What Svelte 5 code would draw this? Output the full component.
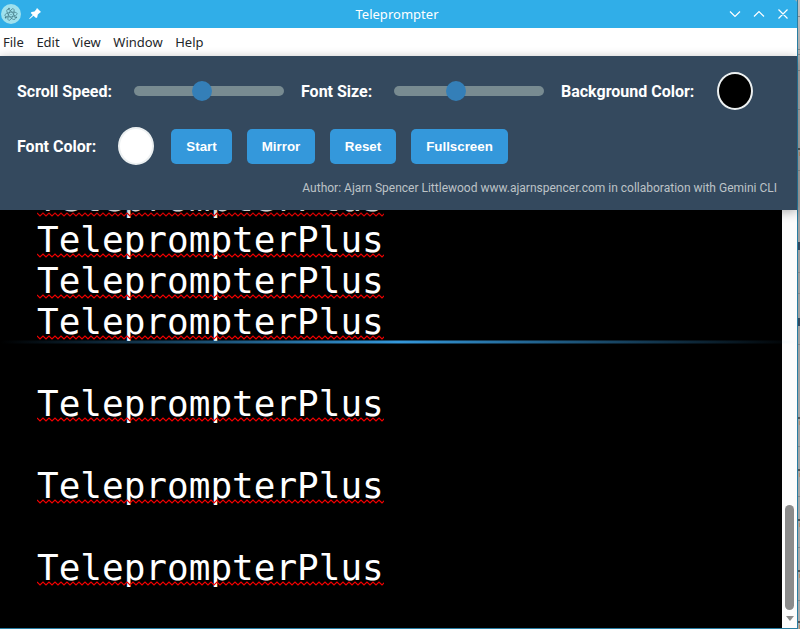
<script>
  const menus = ['File', 'Edit', 'View', 'Window', 'Help'];
  const lines = ['TeleprompterPlus', 'TeleprompterPlus', 'TeleprompterPlus', 'TeleprompterPlus', '', 'TeleprompterPlus', '', 'TeleprompterPlus', '', 'TeleprompterPlus'];
  const wave = 'M0 1' + Array.from({ length: 58 }, (_, i) => `L${i * 6 + 3} 4L${(i + 1) * 6} 1`).join('');
  const marks = [[16, 0], [49, 0], [54, 0], [70, 0], [109, 0], [148, 1], [170, 0], [242, 2], [272, 0], [293, 0], [318, 2], [344, 0], [417, 1], [446, 0], [469, 1], [496, 0], [519, 1], [547, 0], [570, 1], [600, 0], [621, 1]];
</script>

<div class="screen">
  <div class="window">
    <header>
      <svg class="logo" width="22" height="28" viewBox="0 0 22 28">
        <circle cx="11" cy="14" r="10" fill="#9fe1ed" />
        <g fill="none" stroke="#477d89" stroke-width=".7">
          <ellipse cx="11" cy="14.5" rx="6.2" ry="2.3" transform="rotate(-8 11 14.5)" />
          <ellipse cx="11" cy="14.5" rx="6.2" ry="2.3" transform="rotate(52 11 14.5)" />
          <ellipse cx="11" cy="14.5" rx="6.2" ry="2.3" transform="rotate(112 11 14.5)" />
        </g>
        <g fill="#477d89"><circle cx="11" cy="14.5" r=".6" /><circle cx="5.7" cy="17.5" r=".9" /><circle cx="16.2" cy="17.3" r=".9" /><circle cx="9" cy="8.6" r=".9" /></g>
      </svg>
      <svg class="pin" width="14" height="14" viewBox="0 0 14 14">
        <path d="M9 1 13 5 11.8 5.8 9.8 7.5 9.2 10.5 8 11 5.5 8.8 1.8 12 1.2 11.4 4.7 8 2.8 6 3.5 5 6.5 4.5 8.2 2.5Z" fill="#fff" />
      </svg>
      <span>Teleprompter</span>
      <svg class="controls" width="64" height="14" viewBox="0 0 64 14" fill="none" stroke="#fff" stroke-width="1.2">
        <path d="M2 4.5 7 9.5 12 4.5M26 9.5 31 4.5 36 9.5M50.5 2.5 59.5 11.5M59.5 2.5 50.5 11.5" />
      </svg>
    </header>
    <nav>{#each menus as m}<span>{m}</span>{/each}</nav>
    <section class="panel">
      <div class="row">
        <b class="l1">Scroll Speed:</b>
        <div class="track"><i style:margin-left="58px"></i></div>
        <b class="l2">Font Size:</b>
        <div class="track"><i style:margin-left="52px"></i></div>
        <b class="l3">Background Color:</b>
        <div class="swatch black"></div>
      </div>
      <div class="row second">
        <b class="l4">Font Color:</b>
        <div class="swatch"></div>
        <button style:width="61px">Start</button>
        <button style:width="68px">Mirror</button>
        <button style:width="66px">Reset</button>
        <button style:width="97px">Fullscreen</button>
      </div>
      <p>Author: Ajarn Spencer Littlewood www.ajarnspencer.com in collaboration with Gemini CLI</p>
    </section>
    <main>
      <div class="text">
        {#each lines as line}
          <div class="line">
            {line}
            {#if line}<svg width="347" height="5"><path d={wave} fill="none" stroke="#f00000" stroke-width="1.2" /></svg>{/if}
          </div>
        {/each}
      </div>
      <div class="scroll"><div class="thumb"></div><div class="arrow"></div></div>
      <div class="guide"></div>
    </main>
  </div>
  <div class="behind">
    {#each marks as [y, kind]}<i class="k{kind}" style:top="{y}px"></i>{/each}
  </div>
</div>

<style>
  .screen { display: flex; width: 800px; height: 629px; overflow: hidden; background: #aaa; }
  .window { width: 797px; height: 628px; border-right: 1px solid #287da2; border-bottom: 1px solid #287da2; display: flex; flex-direction: column; flex: none; }
  header { height: 28px; flex: none; background: #30aee8; display: flex; align-items: center; color: #fff; font: 13px/28px "Noto Sans", sans-serif; border-radius: 0 3px 0 0; }
  .logo { display: block; }
  .pin { margin-left: 6px; }
  header span { flex: 1; text-align: center; padding-left: 24px; letter-spacing: .02px; }
  .controls { margin-right: 5px; }
  nav { height: 28px; flex: none; background: #fff; display: flex; gap: 12.6px; padding-left: 3px; font: 13px/29px "Noto Sans", sans-serif; color: #232629; }
  .panel { height: 154px; flex: none; box-sizing: border-box; background: #34495e; padding: 16px 0 0 17px; color: #fff; font-family: Roboto, sans-serif; position: relative; z-index: 2; box-shadow: 0 2px 10px rgba(0,0,0,.3); }
  .row { height: 38px; display: flex; align-items: center; }
  .second { margin-top: 17px; }
  b { font-size: 16px; font-weight: 700; white-space: nowrap; flex: none; }
  .l1 { width: 117px; } .l2 { width: 93px; margin-left: 17px; } .l3 { width: 156px; margin-left: 17px; } .l4 { width: 101px; }
  .track { width: 150px; height: 10px; border-radius: 5px; background: #788b91; display: flex; align-items: center; flex: none; }
  .track i { width: 20px; height: 20px; border-radius: 50%; background: #347fb8; }
  .swatch { box-sizing: border-box; width: 36px; height: 38px; border: 2px solid #ecf0f1; border-radius: 50%; background: #fff; flex: none; }
  .black { background: #000; }
  button { height: 35px; padding: 0; border: 0; border-radius: 5px; background: #3498db; color: #fff; font: bold 13.333px "Liberation Sans", sans-serif; margin-right: 15px; }
  .swatch + button { margin-left: 17px; }
  p { margin: 15px 20px 0 0; text-align: right; font-size: 12px; line-height: 16px; color: #bdc3c7; }
  main { flex: 1; min-height: 0; display: flex; background: #000; position: relative; overflow: hidden; }
  .text { flex: 1; margin-top: -32px; padding-left: 37px; color: #fff; font: 36px/41px "DejaVu Sans Mono", monospace; }
  .line { height: 41px; position: relative; }
  .line svg { position: absolute; left: 0; top: 34px; }
  .scroll { width: 15px; background: #fcfcfc; display: flex; flex-direction: column; align-items: center; }
  .thumb { width: 9px; height: 105px; margin-top: 295px; border-radius: 5px; background: #8b8b8b; }
  .arrow { margin-top: 6px; border: 4.5px solid transparent; border-top: 5px solid #8b8b8b; border-bottom: 0; }
  .guide { position: absolute; left: 0; right: 0; top: 131px; height: 3px; background: linear-gradient(90deg, transparent, #3498db, transparent); transform: translateY(-.5px); }
  .behind { flex: 1; background: linear-gradient(#c0c0c0, #aaa 10%, #9d9d9d 45%, #aaa); position: relative; overflow: hidden; }
  .behind i { position: absolute; left: 0; width: 2px; height: 1px; background: #888; }
  .behind .k1 { height: 2px; background: #555; box-shadow: 2px 5px 0 1px #b08e6e; }
  .behind .k2 { box-sizing: border-box; height: 8px; border: 1px solid #34495e; background: #8ca5b5; }
</style>
